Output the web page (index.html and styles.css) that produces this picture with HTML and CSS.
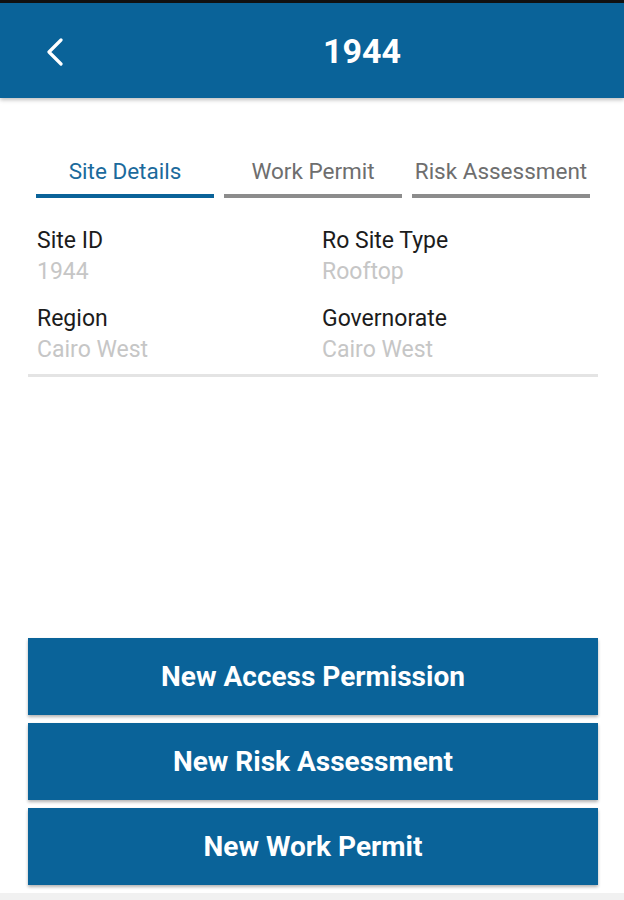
FILE: index.html
```html
<!DOCTYPE html>
<html lang="en">
<head>
  <meta charset="UTF-8">
  <meta name="viewport" content="width=device-width, initial-scale=1.0">
  <title>1944</title>
  <link rel="stylesheet" href="styles.css">
</head>
<body>
  <div class="app">
    <!-- Header -->
    <div class="topbar">
      <button class="back" aria-label="Back">
        <svg width="18" height="28" viewBox="0 0 18 28">
          <path d="M15 2 L3 14 L15 26" fill="none" stroke="#fff" stroke-width="3.2" stroke-linecap="round" stroke-linejoin="round"/>
        </svg>
      </button>
      <div class="title">1944</div>
    </div>

    <!-- Tabs -->
    <div class="tabs">
      <div class="tab active">Site Details</div>
      <div class="tab">Work Permit</div>
      <div class="tab">Risk Assessment</div>
    </div>

    <!-- Site details -->
    <div class="details">
      <div class="field">
        <div class="label">Site ID</div>
        <div class="value">1944</div>
      </div>
      <div class="field">
        <div class="label">Ro Site Type</div>
        <div class="value">Rooftop</div>
      </div>
      <div class="field">
        <div class="label">Region</div>
        <div class="value">Cairo West</div>
      </div>
      <div class="field">
        <div class="label">Governorate</div>
        <div class="value">Cairo West</div>
      </div>
    </div>

    <!-- Actions -->
    <div class="actions">
      <button class="action">New Access Permission</button>
      <button class="action">New Risk Assessment</button>
      <button class="action">New Work Permit</button>
    </div>

    <div class="bottom-strip"></div>
  </div>
</body>
</html>
```

FILE: styles.css
```css
/* General styling */
body {
  margin: 0;
  padding: 0;
  background-color: #fff;
  font-family: Roboto, "Liberation Sans", sans-serif;
  color: #1a1a1a;
}

.app {
  width: 624px;
  height: 900px;
  display: flex;
  flex-direction: column;
  overflow: hidden;
  border-top: 3px solid #111;
  box-sizing: border-box;
}

/* Header bar */
.topbar {
  height: 95px;
  flex-shrink: 0;
  background-color: #0a6399;
  display: flex;
  align-items: center;
  box-shadow: 0 2px 4px rgba(0, 0, 0, 0.25);
}

.back {
  background: none;
  border: none;
  padding: 0;
  margin-left: 46px;
  margin-top: 2px;
  display: flex;
  cursor: pointer;
}

.title {
  flex: 1;
  text-align: center;
  padding-left: 36px;
  color: #fff;
  font-size: 34px;
  font-weight: bold;
}

/* Tabs */
.tabs {
  display: flex;
  gap: 10px;
  padding: 0 34px 0 36px;
  margin-top: 60px;
}

.tab {
  flex: 1;
  text-align: center;
  font-size: 22.5px;
  color: #6e6e6e;
  padding-bottom: 10px;
  border-bottom: 4px solid #8c8c8c;
  white-space: nowrap;
}

.tab.active {
  color: #1b6a9c;
  border-bottom-color: #0a6399;
}

/* Details grid */
.details {
  display: grid;
  grid-template-columns: 285px 1fr;
  margin: 28px 26px 0 28px;
  padding: 0 0 8px 9px;
  border-bottom: 3px solid #e4e4e4;
  row-gap: 16px;
}

.label {
  font-size: 23px;
  color: #1c1c1c;
  line-height: 30px;
}

.value {
  font-size: 23px;
  color: #c6c6c6;
  line-height: 32px;
}

/* Action buttons */
.actions {
  margin-top: auto;
  display: flex;
  flex-direction: column;
  gap: 8px;
  padding: 0 26px 0 28px;
}

.action {
  height: 77px;
  border: none;
  background-color: #0a6399;
  color: #fff;
  font-family: Roboto, "Liberation Sans", sans-serif;
  font-size: 28px;
  font-weight: bold;
  box-shadow: 0 2px 3px rgba(0, 0, 0, 0.3);
  cursor: pointer;
}

.bottom-strip {
  height: 7px;
  margin-top: 8px;
  background-color: #f1f1f1;
}
```
